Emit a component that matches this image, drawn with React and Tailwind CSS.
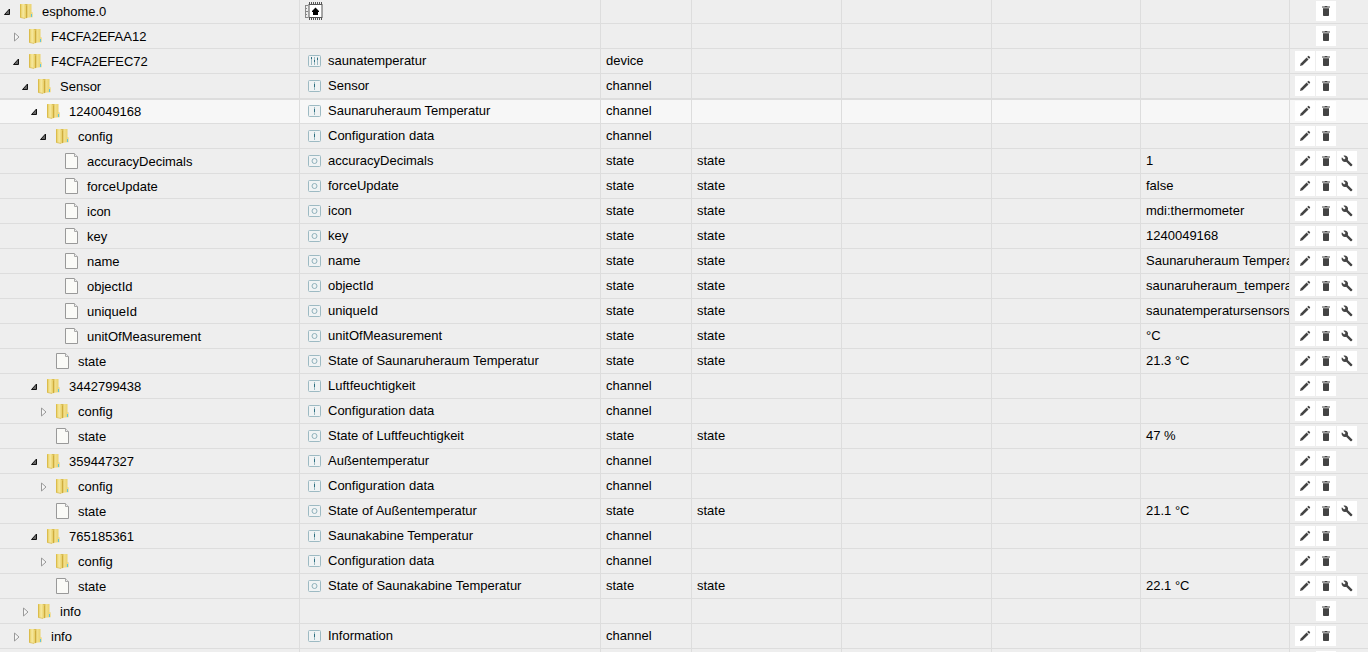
import React, { useState } from 'react'

const objects = [
    { id: 'esphome.0', depth: 0, kind: 'adapter', open: true },
    { id: 'F4CFA2EFAA12', depth: 1, open: false },
    { id: 'F4CFA2EFEC72', depth: 1, open: true, name: 'saunatemperatur', kind: 'device' },
    { id: 'Sensor', depth: 2, open: true, name: 'Sensor', kind: 'channel' },
    { id: '1240049168', depth: 3, open: true, name: 'Saunaruheraum Temperatur', kind: 'channel' },
    { id: 'config', depth: 4, open: true, name: 'Configuration data', kind: 'channel' },
    { id: 'accuracyDecimals', depth: 5, name: 'accuracyDecimals', kind: 'state', value: '1' },
    { id: 'forceUpdate', depth: 5, name: 'forceUpdate', kind: 'state', value: 'false' },
    { id: 'icon', depth: 5, name: 'icon', kind: 'state', value: 'mdi:thermometer' },
    { id: 'key', depth: 5, name: 'key', kind: 'state', value: '1240049168' },
    { id: 'name', depth: 5, name: 'name', kind: 'state', value: 'Saunaruheraum Temperatur' },
    { id: 'objectId', depth: 5, name: 'objectId', kind: 'state', value: 'saunaruheraum_temperatur' },
    { id: 'uniqueId', depth: 5, name: 'uniqueId', kind: 'state', value: 'saunatemperatursensorsaunaruheraum_temperatur' },
    { id: 'unitOfMeasurement', depth: 5, name: 'unitOfMeasurement', kind: 'state', value: '°C' },
    { id: 'state', depth: 4, name: 'State of Saunaruheraum Temperatur', kind: 'state', value: '21.3 °C' },
    { id: '3442799438', depth: 3, open: true, name: 'Luftfeuchtigkeit', kind: 'channel' },
    { id: 'config', depth: 4, open: false, name: 'Configuration data', kind: 'channel' },
    { id: 'state', depth: 4, name: 'State of Luftfeuchtigkeit', kind: 'state', value: '47 %' },
    { id: '359447327', depth: 3, open: true, name: 'Außentemperatur', kind: 'channel' },
    { id: 'config', depth: 4, open: false, name: 'Configuration data', kind: 'channel' },
    { id: 'state', depth: 4, name: 'State of Außentemperatur', kind: 'state', value: '21.1 °C' },
    { id: '765185361', depth: 3, open: true, name: 'Saunakabine Temperatur', kind: 'channel' },
    { id: 'config', depth: 4, open: false, name: 'Configuration data', kind: 'channel' },
    { id: 'state', depth: 4, name: 'State of Saunakabine Temperatur', kind: 'state', value: '22.1 °C' },
    { id: 'info', depth: 2, open: false },
    { id: 'info', depth: 1, open: false, name: 'Information', kind: 'channel' },
    { id: '', depth: 0 },
]

const ExpanderIcon = ({ open }) => (
    <svg className="block w-3 h-4" viewBox="0 0 12 16">
        {open ? (
            <path d="M6.5 6V11.5H1.5Z" fill="#666" stroke="#111" strokeLinejoin="round" />
        ) : (
            <path d="M2.5 5L7 9L2.5 13Z" fill="#f6f6f6" stroke="#999" strokeLinejoin="round" />
        )}
    </svg>
)

const FolderIcon = () => (
    <svg className="block w-4 h-4" viewBox="0 0 16 16">
        <defs>
            <linearGradient id="folder-front" x1="0" x2="1">
                <stop offset="0" stopColor="#e3c650" />
                <stop offset="0.45" stopColor="#f7e9a0" />
                <stop offset="1" stopColor="#e2c552" />
            </linearGradient>
            <linearGradient id="folder-back" x1="0" x2="1">
                <stop offset="0" stopColor="#b99528" />
                <stop offset="0.4" stopColor="#f3e08a" />
                <stop offset="1" stopColor="#e6cb62" />
            </linearGradient>
        </defs>
        <path d="M6 1H12.5V9L14 10V14L7 15Z" fill="url(#folder-back)" />
        <path d="M12.5 9L14 10V14L12.5 14.5Z" fill="#f0dfa0" />
        <path d="M12 11H13V14H12Z" fill="#5fc4dc" />
        <path d="M1 1H6L8 2.5V15L6 15.5L1 14.5Z" fill="url(#folder-front)" />
        <path d="M1.5 1.5V14.5L6 15.5" fill="none" stroke="#d3b142" strokeWidth="0.6" />
        <path d="M7.5 2.5V15" stroke="#c9a535" strokeWidth="0.8" />
    </svg>
)

const FileIcon = () => (
    <svg className="block w-4 h-4" viewBox="0 0 16 16">
        <path d="M1.5 0.5H10.5L13.5 3.500V15.5H1.5Z" fill="#fafaf7" stroke="#999" />
        <path d="M10.5 0.5V3.5H13.5" fill="#eee" stroke="#aaa" />
    </svg>
)

const KindIcon = ({ kind }) => {
    if (kind === 'adapter') {
        return (
            <svg className="block w-5 h-5" viewBox="0 0 20 20">
                <path d="M1 4.5H4M1 7.5H3M1 10.5H4M1 13.500H3M1 16.5H4M1.5 4V16" stroke="#888" />
                <path d="M5 2H18M5 18H18" stroke="#555" strokeWidth="2" strokeDasharray="1 1" />
                <rect x="5" y="3.5" width="13" height="13" fill="#fff" stroke="#555" />
                <path d="M11.500 6.5L15 10V11H14V14H9V11H8V10Z" fill="#000" />
            </svg>
        )
    }
    return (
        <svg className="block w-[13px] h-[13px]" viewBox="0 0 13 13">
            <rect x="0.5" y="0.5" width="12" height="11" rx="1" fill="#f0f3f4" stroke="#9dbac3" />
            {kind === 'state' && <circle cx="6.5" cy="6" r="2.5" fill="none" stroke="#8fb1bb" />}
            {kind === 'channel' && (
                <>
                    <path d="M6.5 2V10" stroke="#9ab9c2" />
                    <path d="M6.5 4V7" stroke="#2f6f80" />
                </>
            )}
            {kind === 'device' && (
                <>
                    <path d="M3.5 2V10M6.5 2V10M9.5 2V10" stroke="#9ab9c2" />
                    <path d="M3.5 2V4M6.5 5V7M9.5 3V5" stroke="#2f6f80" />
                </>
            )}
        </svg>
    )
}

const actionPaths = {
    Edit: (
        <>
            <path d="M1 11L1.700 8.400L7.600 2.500L9.500 4.400L3.600 10.300Z" />
            <path d="M8.200 1.900L9.100 1Q9.500 0.700 9.900 1L11 2.100Q11.300 2.500 11 2.900L10.100 3.800Z" />
        </>
    ),
    Delete: (
        <>
            <path d="M2 1.500H4.500L5 1H7L7.500 1.500H10V2.600H2Z" />
            <path d="M3 3.300H9V10.200Q9 11 8.200 11H3.800Q3 11 3 10.200Z" />
        </>
    ),
    Configure: (
        <path d="M11.300 9.500L6.800 5C7.300 3.800 7 2.400 6.100 1.500C5.100 0.500 3.600 0.300 2.400 0.800L4.600 3L3.100 4.500L0.900 2.300C0.300 3.500 0.600 5 1.600 6C2.500 6.900 3.900 7.200 5.100 6.700L9.600 11.200C9.800 11.400 10.100 11.400 10.300 11.200L11.300 10.200C11.500 10 11.500 9.700 11.300 9.500Z" />
    ),
}

const ActionButton = ({ label }) => (
    <button type="button" aria-label={label} className="flex w-5 h-5 items-center justify-center bg-white text-[#444]">
        <svg className="w-3 h-3" viewBox="0 0 12 12" fill="currentColor">{actionPaths[label]}</svg>
    </button>
)

const cell = 'p-0 border-b border-r border-[#ddd]'
const text = 'h-6 pl-[5px] leading-6 whitespace-nowrap overflow-hidden'

const ObjectRow = ({ item, open, selected, onToggle }) => {
    const isState = item.kind === 'state'
    const editable = item.name !== undefined

    return (
        <tr className={selected ? 'bg-[#f7f7f7] shadow-[inset_0_1px_0_#ddd]' : ''}>
            <td className={cell}>
                <div className="flex h-6 items-center" style={{ paddingLeft: 3 + item.depth * 9 }}>
                    {item.id && (
                        <>
                            {open === undefined ? (
                                <span className="w-3"></span>
                            ) : (
                                <button type="button" aria-label={`Toggle ${item.id}`} aria-expanded={open} onClick={onToggle}>
                                    <ExpanderIcon open={open} />
                                </button>
                            )}
                            <span className="ml-1 mr-[7px]">{open === undefined ? <FileIcon /> : <FolderIcon />}</span>
                            <span className="pt-px leading-6 whitespace-nowrap">{item.id}</span>
                        </>
                    )}
                </div>
            </td>
            <td className={cell}>
                <div className={`flex h-6 items-center overflow-hidden whitespace-nowrap ${item.kind === 'adapter' ? 'pl-1' : 'pl-2'}`}>
                    {item.kind && <KindIcon kind={item.kind} />}
                    <span className="ml-[7px] leading-6">{item.name}</span>
                </div>
            </td>
            <td className={cell}><div className={text}>{item.kind === 'adapter' ? '' : item.kind}</div></td>
            <td className={cell}><div className={text}>{isState ? 'state' : ''}</div></td>
            <td className={cell}></td>
            <td className={cell}></td>
            <td className={cell}><div className={text}>{item.value}</div></td>
            <td className="p-0 border-b border-[#ddd]">
                <div className="flex h-6 items-center gap-px pl-[5px]">
                    {editable ? <ActionButton label="Edit" /> : <span className="w-5"></span>}
                    <ActionButton label="Delete" />
                    {isState && <ActionButton label="Configure" />}
                </div>
            </td>
        </tr>
    )
}

const App = () => {
    const [openState, setOpenState] = useState(objects.map((item) => item.open))
    const selectedIndex = 4

    const toggle = (index) => {
        setOpenState((prev) => prev.map((open, i) => (i === index ? !open : open)))
    }

    // everything deeper than a closed node is hidden
    const rows = []
    let closedDepth = Infinity
    objects.forEach((item, index) => {
        if (item.depth > closedDepth) return
        closedDepth = openState[index] === false ? item.depth : Infinity
        rows.push(
            <ObjectRow
                key={index}
                item={item}
                open={openState[index]}
                selected={index === selectedIndex}
                onToggle={() => toggle(index)}
            />
        )
    })

    return (
        <div className="h-screen overflow-hidden bg-[#eee] font-['Liberation_Sans',Arial,sans-serif] text-[13px] text-black">
            <table className="-mt-px w-full table-fixed border-separate border-spacing-0">
                <colgroup>
                    <col className="w-[300px]" />
                    <col />
                    <col className="w-[91px]" />
                    <col className="w-[150px]" />
                    <col className="w-[150px]" />
                    <col className="w-[149px]" />
                    <col className="w-[149px]" />
                    <col className="w-[78px]" />
                </colgroup>
                <tbody>{rows}</tbody>
            </table>
        </div>
    )
}

export default App
